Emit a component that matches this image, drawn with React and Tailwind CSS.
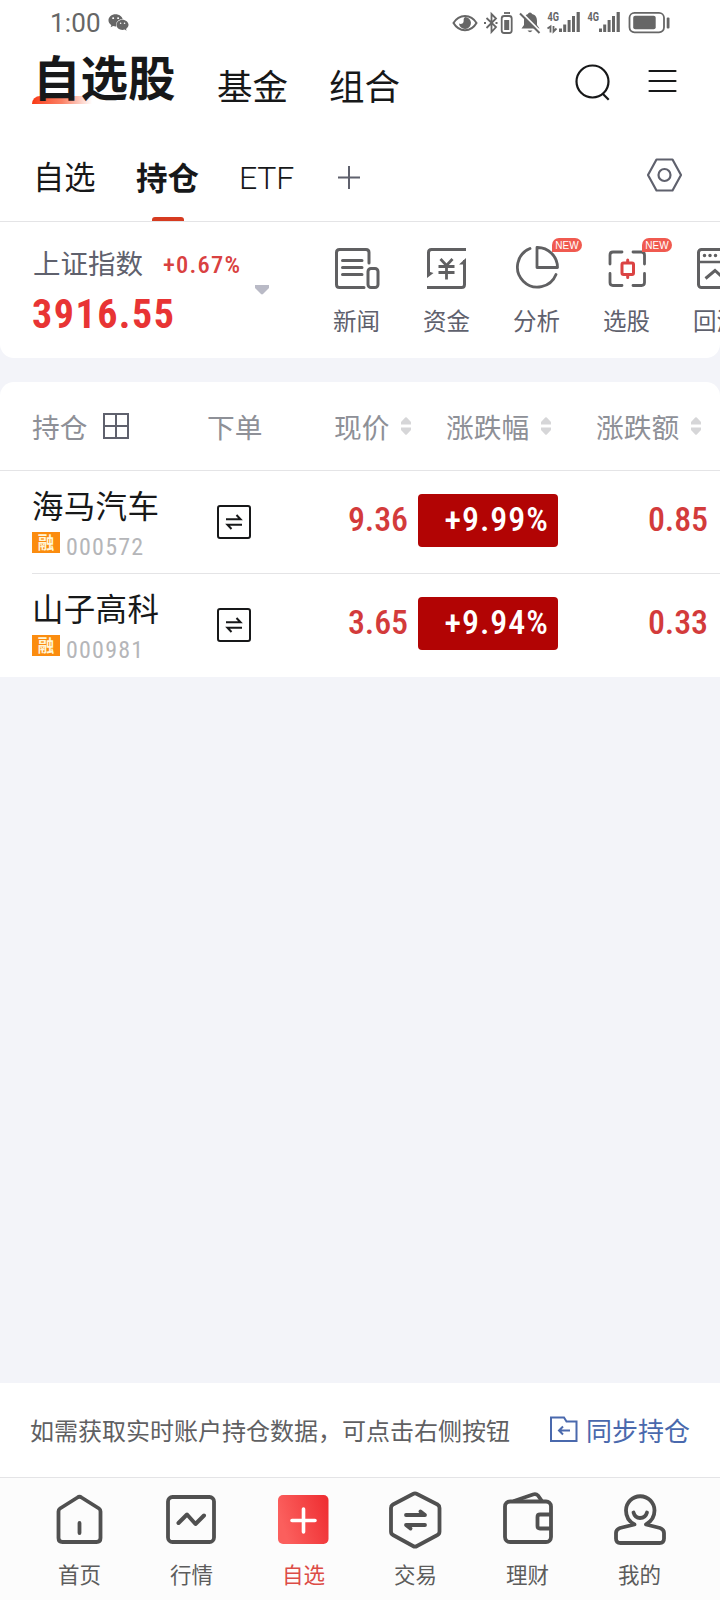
import React from "react";
import { FaWeixin } from "react-icons/fa";

const zh = "font-['Noto_Sans_CJK_SC',sans-serif]";
const num = "font-['Roboto','Liberation_Sans',sans-serif]";

const stocks = [
  { name: "海马汽车", code: "000572", price: "9.36", percent: "+9.99%", change: "0.85" },
  { name: "山子高科", code: "000981", price: "3.65", percent: "+9.94%", change: "0.33" },
];

const Signal = ({ data }) => (
  <svg className="overflow-visible" width="34" height="24" viewBox="0 0 34 24" fill="#666">
    <text x="0.5" y="9" fontSize="12" fontWeight="700" fontFamily="Roboto" textLength="11.5" lengthAdjust="spacingAndGlyphs">4G</text>
    {data && (
      <g stroke="#666" strokeWidth="1.8" fill="none">
        <path d="M0.500 16.500L3.500 14.500V20.500" />
        <path d="M6.500 14V19.500L9.500 16.500" />
      </g>
    )}
    <rect x="12" y="16.500" width="3" height="3.500" />
    <rect x="16.200" y="12.500" width="3" height="7.500" />
    <rect x="20.600" y="8" width="3" height="12" />
    <rect x="25" y="4" width="3" height="16" />
    <rect x="29.600" y="0" width="3.200" height="20" />
  </svg>
);

const StatusBar = () => (
  <div className="flex h-[45px] items-center pl-[50px] pr-[50px] text-[#666]">
    <span className={`${num} w-[58px] text-[26px] leading-none tracking-[0.2px]`}>1:00</span>
    <FaWeixin size={21} />
    <svg className="ml-auto" width="26" height="18" viewBox="0 0 26 18">
      <path d="M1.5 9C7-0.5 19-0.5 24.5 9C19 18.5 7 18.5 1.5 9Z" fill="none" stroke="#666" strokeWidth="2" />
      <path d="M13 3A6 6 0 1 1 7 9.5C8.5 10.5 11 10 11.5 8C12 6 11 4.500 13 3Z" fill="#666" />
    </svg>
    <svg className="ml-[6px]" width="30" height="24" viewBox="0 0 30 24" fill="none" stroke="#666" strokeWidth="1.8">
      <path d="M2.500 7L12 16L7.500 21V3L12 7.500L2.500 17" />
      <path d="M0 12H2M11.500 12H13.500" />
      <rect x="17.700" y="5" width="10" height="17" rx="2.500" />
      <path d="M20 2H26" />
      <rect x="20.200" y="9" width="5" height="10" fill="#666" stroke="none" />
    </svg>
    <svg className="ml-[5px]" width="22" height="23" viewBox="0 0 22 23">
      <path d="M11 1.500C12.200 1.500 12.800 2.300 13 3C17 4 18 7 18 10V14L20.500 17.500H2.500L5 14V9C5 6 6.500 3.800 9 3C9.200 2.300 9.800 1.500 11 1.500Z" fill="#666" />
      <path d="M8.500 19.500H13.500Q11 23 8.500 19.500Z" fill="#666" />
      <path d="M2.500 1.500L22 21" stroke="#fff" strokeWidth="1.800" />
      <path d="M1 2.500L20.500 22" stroke="#666" strokeWidth="2" />
    </svg>
    <div className="ml-[6px] mt-[2px]"><Signal data /></div>
    <div className="ml-[6px] mt-[2px]"><Signal /></div>
    <svg className="ml-[7px]" width="42" height="23" viewBox="0 0 42 23">
      <rect x="1.500" y="1.800" width="34.500" height="19.500" rx="5" fill="none" stroke="#666" strokeWidth="1.800" />
      <rect x="5.200" y="4.800" width="22.500" height="13.500" rx="2" fill="#666" />
      <rect x="38.700" y="6.500" width="2.800" height="11" rx="1" fill="#666" />
    </svg>
  </div>
);

const Header = () => (
  <div className={`${zh} flex h-[75px] items-start pl-8 text-[#171819]`}>
    <div className="relative w-[185px] pl-px">
      <span className="absolute left-0 top-[51px] h-2 w-[60px] rounded-tl-[8px] bg-gradient-to-r from-[#f8360c] via-[#fb8064] to-transparent"></span>
      <h1 className="relative mt-[6px] text-[47.5px] font-bold leading-[50px]">自选股</h1>
    </div>
    <span className="mt-[22px] w-[112px] text-[35.5px] leading-[36px]">基金</span>
    <span className="mt-[22px] text-[35.5px] leading-[36px]">组合</span>
    <svg className="ml-auto mt-[18px]" width="36" height="38" viewBox="0 0 36 38" fill="none" stroke="#171819" strokeWidth="2.200">
      <circle cx="17.500" cy="18.500" r="16" />
      <path d="M28 31L33.700 36.700" />
    </svg>
    <svg className="ml-[37px] mr-[43px] mt-[24px]" width="29" height="24" viewBox="0 0 29 24" stroke="#171819" strokeWidth="2.200" strokeLinecap="round">
      <path d="M1.500 2H27.500M1.500 12H27.500M1.500 22H27.500" />
    </svg>
  </div>
);

const Tabs = () => (
  <div className={`${zh} flex h-[102px] items-center border-b border-[#e4e4e6] pl-[33px] text-[#171819]`}>
    <span className="mt-[11px] w-[103px] text-[31.3px] leading-none">自选</span>
    <div className="relative mt-[12px] w-[104px] text-[31.5px] font-bold leading-none">
      持仓
      <span className="absolute left-[16px] top-[56px] h-[4px] w-8 rounded-t-[3px] bg-[#d63b20]"></span>
    </div>
    <span className={`${num} -ml-px mt-[14px] w-[99px] text-[32px] font-light leading-none tracking-[-0.2px]`}>ETF</span>
    <svg className="mt-[13px]" width="23" height="23" viewBox="0 0 23 23" stroke="#5f616d" strokeWidth="2">
      <path d="M0 11.500H22M11 0V23" />
    </svg>
    <svg className="ml-auto mr-[37px] mt-[8px]" width="36" height="34" viewBox="0 0 36 34" fill="none" stroke="#5f616d" strokeWidth="2.200" strokeLinejoin="round">
      <path d="M9.500 1.500H25.500L34 17L25.500 32.500H9.500L1 17Z" />
      <circle cx="17.500" cy="17" r="6" />
    </svg>
  </div>
);

const NewsIcon = () => (
  <svg width="46" height="44" viewBox="0 0 46 44" fill="none" stroke="#606062" strokeWidth="3" strokeLinecap="round">
    <path d="M35 17V6.500Q35 3.500 32 3.500H5.500Q2.500 3.500 2.500 6.500V38.500Q2.500 41.500 5.500 41.500H30" />
    <path d="M8.500 14.500H28M8.500 21.500H28M8.500 28.500H28" />
    <rect x="34" y="22.500" width="10" height="19" rx="3" />
  </svg>
);

const FundIcon = () => (
  <svg width="46" height="44" viewBox="0 0 46 44" fill="none" stroke="#606062" strokeWidth="3">
    <path d="M42 3.500H7.500Q4.500 3.500 4.500 6.500V29" />
    <path d="M3 41.500H37.500Q40.500 41.500 40.500 38.500V14" />
    <path d="M3 25V32L9.500 27ZM42 20V12L35 18.500H42Z" fill="#606062" stroke="none" />
    <path d="M16.500 13L22.500 19.500L28.500 13M14.500 20.500H30.500M14.500 26.500H30.500M22.500 20V33.500" strokeWidth="2.800" />
  </svg>
);

const AnalysisIcon = () => (
  <svg width="46" height="44" viewBox="0 0 46 44" fill="none" stroke="#606062" strokeWidth="2.800" strokeLinecap="round" strokeLinejoin="round">
    <path d="M16 2.500A20 20 0 1 0 42 28.500" />
    <path d="M23 1.500V21.500H43.500A20 20 0 0 0 23 1.500Z" />
  </svg>
);

const PickIcon = () => (
  <svg width="46" height="44" viewBox="0 0 46 44" fill="none" stroke="#606062" strokeWidth="2.800" strokeLinecap="round">
    <path d="M6 18V9Q6 6 9 6H18M29 6H37.500Q40.500 6 40.500 9V18M40.500 27.500V36.500Q40.500 39.500 37.500 39.500H29M18 39.500H9Q6 39.500 6 36.500V27.500" />
    <g stroke="#db4343" strokeWidth="3">
      <rect x="18" y="17" width="11.500" height="11.500" rx="1.500" />
      <path d="M23.700 14V16M23.700 30V31.500" />
    </g>
  </svg>
);

const BacktestIcon = () => (
  <svg width="46" height="44" viewBox="0 0 46 44" fill="none" stroke="#606062" strokeWidth="3">
    <rect x="4.500" y="3.500" width="38" height="38" rx="3" />
    <path d="M4 16H42" strokeWidth="2.500" />
    <path d="M11.500 32.500L21 24.500L26 29L35 20" />
    <path d="M10.500 9.500V9.500M16 9.500V9.500M21.500 9.500V9.500" strokeLinecap="round" strokeWidth="3.500" />
  </svg>
);

const tools = [
  { text: "新闻", icon: <NewsIcon /> },
  { text: "资金", icon: <FundIcon /> },
  { text: "分析", icon: <AnalysisIcon />, isNew: true },
  { text: "选股", icon: <PickIcon />, isNew: true },
  { text: "回测", icon: <BacktestIcon /> },
];

const IndexPanel = () => (
  <div className="flex h-[136px] overflow-hidden rounded-b-[14px] bg-white">
    <div className="w-[222px] shrink-0 pl-[32px] pt-[21px]">
      <div className="flex items-center">
        <span className={`${zh} w-[131px] shrink-0 pl-px text-[27.5px] leading-8 text-[#5f616d]`}>上证指数</span>
        <span className={`${num} mt-[6px] whitespace-nowrap text-[24.5px] font-medium leading-8 tracking-[1.2px] text-[#d94141] font-stretch-[85%]`}>+0.67%</span>
      </div>
      <div className={`${num} mt-[14px] text-[40px] font-bold leading-10 text-[#e83434] tracking-[1.5px] font-stretch-[85%]`}>3916.55</div>
    </div>
    <svg className="ml-[33px] mt-[63px] shrink-0" width="14" height="10" viewBox="0 0 14 10">
      <path d="M0 0H14V3L8 9Q7 9.800 6 9L0 3Z" fill="#b9bac6" />
    </svg>
    <div className="ml-[42px] flex shrink-0 pt-[24px]">
      {tools.map((data, index) => (
        <div key={index} className="relative w-[90px] shrink-0 pl-[23px]">
          {data.icon}
          <div className={`${zh} mt-[14px] -ml-px text-[23.5px] leading-8 text-[#5f616d]`}>{data.text}</div>
          {data.isNew && (
            <span className="absolute left-[61px] -top-[8px] flex h-[14px] w-[30px] items-center justify-center rounded-[7px] rounded-bl-none bg-[#f05a50] pt-px font-['Liberation_Sans',sans-serif] text-[10px] leading-none text-white">
              NEW
            </span>
          )}
        </div>
      ))}
    </div>
  </div>
);

const Sorter = () => (
  <svg width="10" height="18" viewBox="0 0 10 18" fill="#d6d6d8">
    <path d="M4.200 0.500Q5 0 5.800 0.500L10 5V7.500H0V5Z" />
    <path d="M4.200 17.500Q5 18 5.800 17.500L10 13V10.500H0V13Z" />
  </svg>
);

const TableHead = () => (
  <div className={`${zh} flex h-[89px] items-center border-b border-[#e4e4e6] pl-8 text-[27.7px] leading-none text-[#8e9097]`}>
    <span className="mt-[2px] w-[71px]">持仓</span>
    <svg width="26" height="26" viewBox="0 0 26 26" fill="none" stroke="#5f616d" strokeWidth="2">
      <path d="M1 1H25V25H1ZM13 1V25M1 13H25" />
    </svg>
    <span className="ml-[78px] mt-[2px] w-[127px]">下单</span>
    <span className="mt-[2px] w-[67px]">现价</span>
    <Sorter />
    <span className="ml-[35px] mt-[2px] w-[95px]">涨跌幅</span>
    <Sorter />
    <span className="ml-[45px] mt-[2px] w-[95px]">涨跌额</span>
    <Sorter />
  </div>
);

const StockRow = ({ stock, last }) => (
  <div className="pl-8">
    <div className={`flex h-[103px] ${last ? "" : "border-b border-[#e4e4e6]"}`}>
      <div className="w-[185px] pt-[13px]">
        <div className={`${zh} text-[31.5px] leading-10 tracking-[0.3px] text-[#171819]`}>{stock.name}</div>
        <div className="mt-[6px] flex items-start">
          <span className={`${zh} mt-[2px] flex h-[21px] w-7 items-center justify-center bg-[#fb8c0f] text-[16.5px] font-bold leading-none text-[#fff6d8]`}>融</span>
          <span className={`${num} ml-[6px] mt-[5px] text-[24px] leading-6 tracking-[1.2px] text-[#b5b6b9] font-stretch-[85%]`}>{stock.code}</span>
        </div>
      </div>
      <svg className="mt-[34px]" width="34" height="34" viewBox="0 0 34 34" fill="none" stroke="#171819" strokeWidth="2">
        <rect x="1" y="1" width="32" height="32" rx="2" />
        <path d="M9 14.200H23.500L19.500 10M25 19.800H10.500L14.500 24" />
      </svg>
      <span className={`${num} w-[157px] pt-[28px] text-right text-[34px] font-medium leading-10 tracking-[-0.1px] text-[#d33b3b] font-stretch-[85%]`}>{stock.price}</span>
      <div className="ml-[10px] mt-[23px] flex h-[53px] w-[140px] items-center justify-end rounded-[4px] bg-[#b20404] pr-[9px]">
        <span className={`${num} -mt-[3px] text-[34px] font-medium leading-10 tracking-[1px] text-white font-stretch-[85%]`}>{stock.percent}</span>
      </div>
      <span className={`${num} w-[150px] pt-[28px] text-right text-[34px] font-medium leading-10 tracking-[-0.1px] text-[#d33b3b] font-stretch-[85%]`}>{stock.change}</span>
    </div>
  </div>
);

const SyncBar = () => (
  <div className={`${zh} flex h-[94px] items-center bg-white pl-[30px]`}>
    <span className="w-[520px] whitespace-nowrap text-[24px] leading-8 text-[#606062]">如需获取实时账户持仓数据，可点击右侧按钮</span>
    <svg className="-mt-[2px]" width="28" height="27" viewBox="0 0 28 27" fill="none" stroke="#4a69ad" strokeWidth="2">
      <path d="M1 1.500H14L16.500 5.500H26.500V25H1Z" />
      <path d="M20 14.500H9M13 10.500L9 14.500L13 18.500" />
    </svg>
    <span className="ml-[8px] whitespace-nowrap text-[26px] leading-8 text-[#4a69ad]">同步持仓</span>
  </div>
);

const navitems = [
  {
    text: "首页",
    icon: (
      <>
        <path d="M9.500 20.500Q9.500 18.500 11 17.500L28.500 6.500Q30.500 5 32.500 6.500L50 17.500Q51.500 18.500 51.500 20.500V47Q51.500 51 47.500 51H13.500Q9.500 51 9.500 47Z" />
        <path d="M30.500 32V42" />
      </>
    ),
  },
  {
    text: "行情",
    icon: (
      <>
        <rect x="7" y="6" width="46" height="45" rx="4.500" />
        <path d="M17.500 32L26 23.500L34.500 33L43 24.500" strokeWidth="4" />
      </>
    ),
  },
  {
    text: "自选",
    active: true,
    icon: (
      <>
        <defs>
          <linearGradient id="plus" x1="0" x2="1" y1="0.300" y2="0">
            <stop offset="0" stopColor="#fb5f5d" />
            <stop offset="1" stopColor="#ee2c30" />
          </linearGradient>
        </defs>
        <rect x="5" y="4" width="50.500" height="49" rx="5" fill="url(#plus)" stroke="none" />
        <path d="M19 29.500H42M30.500 18V41" stroke="#fff" strokeWidth="3.600" />
      </>
    ),
  },
  {
    text: "交易",
    icon: (
      <>
        <path d="M28 3Q30 1.800 32 3L52.500 13.500Q54.500 14.700 54.500 17V40.500Q54.500 43 52.500 44L32 55Q30 56.200 28 55L8 44Q6 43 6 40.500V17Q6 14.700 8 13.500Z" />
        <path d="M21 24H40L35.500 20.500M40 34H21L25.500 37.500" />
      </>
    ),
  },
  {
    text: "理财",
    icon: (
      <>
        <rect x="8" y="10.500" width="46" height="40.500" rx="5" />
        <path d="M53 23.500H43Q40.500 23.500 40.500 26V35Q40.500 37.500 43 37.500H53" />
        <path d="M17 10L36 3.500Q39 2.500 41 4.500L44.500 9.500" />
      </>
    ),
  },
  {
    text: "我的",
    icon: (
      <>
        <path d="M25.500 33.500C19 30 17 25 17 19.500A14 14 0 0 1 45.500 19.500C45.500 25 43 30 37 33.500L51 37Q55 38.500 55 42V47.500Q55 52 50.500 52H11.500Q7 52 7 47.500V42Q7 38.500 11 37Z" />
        <path d="M24.500 21.500Q26 27 31 27Q36.500 27 38 21.500" />
      </>
    ),
  },
];

const BottomNav = () => (
  <div className="flex h-[123px] border-t border-[#e4e4e6] bg-[#fcfcfc] pl-[23px]">
    {navitems.map((data, index) => (
      <div key={index} className="flex w-28 flex-col items-center pt-[13px]">
        <svg width="60" height="60" viewBox="0 0 60 60" fill="none" stroke="#505050" strokeWidth="3.800" strokeLinecap="round" strokeLinejoin="round">
          {data.icon}
        </svg>
        <span className={`${zh} mt-[7px] pl-px text-[21.500px] leading-8 ${data.active ? "text-[#dc4c46]" : "text-[#5c5c5c]"}`}>{data.text}</span>
      </div>
    ))}
  </div>
);

const App = () => {
  return (
    <div className="flex h-[1600px] w-[720px] flex-col overflow-hidden bg-[#f3f4f9]">
      <div className="bg-white">
        <StatusBar />
        <Header />
        <Tabs />
      </div>
      <IndexPanel />
      <div className="mt-6 rounded-t-[14px] bg-white">
        <TableHead />
        {stocks.map((stock, index) => (
          <StockRow key={stock.code} stock={stock} last={index === stocks.length - 1} />
        ))}
      </div>
      <div className="mt-auto">
        <SyncBar />
        <BottomNav />
      </div>
    </div>
  );
};

export default App;
